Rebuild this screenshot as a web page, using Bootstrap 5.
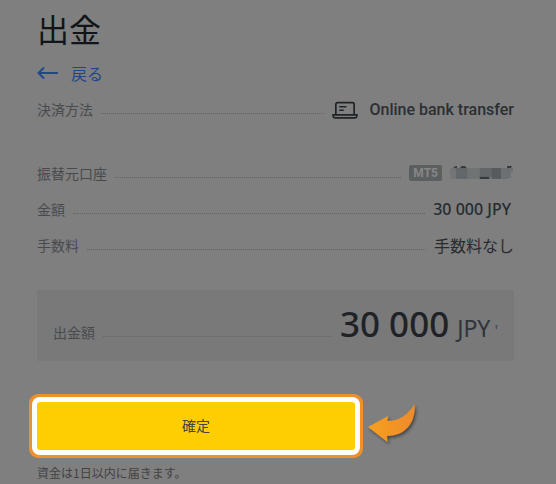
<!DOCTYPE html>
<html lang="ja">
<head>
<meta charset="utf-8">
<meta name="viewport" content="width=device-width, initial-scale=1">
<title>出金</title>
<link href="https://cdn.jsdelivr.net/npm/bootstrap@5.3.0/dist/css/bootstrap.min.css" rel="stylesheet">
<style>
body { background: #7f7f7f; color: #272b30; font-family: "Noto Sans", "Noto Sans CJK JP", sans-serif; font-size: 14px; line-height: 20px; }
.page { padding: 6px 42px 0 37px; }
.page-title { font-family: "Noto Sans CJK JP", sans-serif; font-size: 32px; line-height: 44px; font-weight: 400; color: #111519; }
.back-link { color: #214787; font-size: 16px; line-height: 24px; gap: 13px; margin-top: 11px; font-family: "Noto Sans CJK JP", sans-serif; font-weight: 400; }
.detail { height: 36px; }
.first-detail { margin: 6px 0 28px; }
.term { color: #484b4e; font-family: "Noto Sans CJK JP", sans-serif; font-weight: 400; }
.leader { height: 10px; margin: 0 8px; border-bottom: 1px dotted #626466; }
.method { font: 500 16px/24px Roboto, sans-serif; color: #2b2f34; gap: 11px; padding-top: 2px; }
.platform { font: 700 12px/16px Roboto, sans-serif; background: #5c5f60; color: #858687; padding: 0 4px; border-radius: 2px; }
.amount { font-size: 16px; font-weight: 500; padding-right: 3px; }
.fee { font: 400 16px/24px "Noto Sans CJK JP", sans-serif; }
.total { background: #797979; height: 71px; margin-top: 27px; padding: 12px 16px 0 16px; }
.total-value { padding-bottom: 12px; }
.total-number { font-size: 35px; line-height: 48px; font-weight: 500; color: #1f2328; }
.total-currency { font-size: 23px; line-height: 48px; margin-left: 8px; color: #303438; }
.total-mark { font-size: 16px; margin-left: 4px; color: #44484c; }
.confirm-row { margin-top: 41px; gap: 13px; }
.confirm { width: 66.7%; height: 48px; background: #ffce02; color: #444; border: 0; border-radius: 3px; font: 400 14px/20px "Noto Sans CJK JP", sans-serif; padding: 4px 12px 6px; box-shadow: 0 0 0 5px #fff, 0 0 0 8px #ef912b; }
.confirm:hover { background: #ffce02; }
.note { font: 400 12px/18px "Noto Sans CJK JP", sans-serif; color: #3f4245; margin-top: 14px; }
</style>
<script src="https://cdn.jsdelivr.net/npm/bootstrap@5.3.0/dist/js/bootstrap.bundle.min.js"></script>
</head>
<body>
<main class="page">
  <h1 class="page-title mb-0">出金</h1>
  <a href="#" class="back-link d-flex align-items-center text-decoration-none">
    <svg width="21" height="14" viewBox="0 0 21 14" fill="none" stroke="currentColor" stroke-width="2" aria-hidden="true"><path d="M21 7H2M7 1.500 1.500 7 7 12.500"/></svg>
    戻る
  </a>
  <dl class="mb-0">
    <div class="detail first-detail d-flex align-items-center">
      <dt class="term">決済方法</dt>
      <dd class="leader flex-grow-1" aria-hidden="true"></dd>
      <dd class="method d-flex align-items-center mb-0">
        <svg width="26" height="19" viewBox="0 0 27 19" fill="none" stroke="#202427" stroke-width="1.8" aria-hidden="true"><path d="M4 14V3a1.600 1.600 0 0 1 1.600-1.600h15.800A1.600 1.600 0 0 1 23 3v11M1.200 14h24.600v1.200a2 2 0 0 1-2 2H3.200a2 2 0 0 1-2-2z"/><path stroke-width="1.5" d="M7.500 5.700H15M7.500 9.200h4.700"/></svg>
        Online bank transfer
      </dd>
    </div>
    <div class="detail d-flex align-items-center">
      <dt class="term">振替元口座</dt>
      <dd class="leader flex-grow-1" aria-hidden="true"></dd>
      <dd class="d-flex align-items-center gap-2 mb-0">
        <span class="platform">MT5</span>
        <svg width="64" height="14" viewBox="0 0 65 14" role="img" aria-label="口座番号（非表示）"><path fill="#35393d" d="M3 2 6 0h1v3H3zM10 2l2-2h3l2 2v1h-7zM30 10h3v3h-3zM33 10h7v3h-7zM58 0h5l-3 5h-2z"/><path fill="#737677" d="M0 2h6v11H0z"/><path fill="#636769" d="M6 2h12v11H6z"/><path fill="#707374" d="M18 2h12v11H18z"/><path fill="#636668" d="M30 2h12v9H30z"/><path fill="#565b60" d="M42 2h10v11H42z"/><path fill="#6c7072" d="M52 2h7v11h-7z"/><path fill="#6c7072" d="M59 2h5v4h-2v6h-3z"/></svg>
      </dd>
    </div>
    <div class="detail d-flex align-items-center">
      <dt class="term">金額</dt>
      <dd class="leader flex-grow-1" aria-hidden="true"></dd>
      <dd class="amount mb-0">30 000 JPY</dd>
    </div>
    <div class="detail d-flex align-items-center">
      <dt class="term">手数料</dt>
      <dd class="leader flex-grow-1" aria-hidden="true"></dd>
      <dd class="fee mb-0">手数料なし</dd>
    </div>
    <div class="total d-flex align-items-center">
      <dt class="term">出金額</dt>
      <dd class="leader flex-grow-1" aria-hidden="true"></dd>
      <dd class="total-value d-flex align-items-baseline mb-0"><span class="total-number">30 000</span><span class="total-currency">JPY</span><span class="total-mark">'</span></dd>
    </div>
  </dl>
  <div class="confirm-row d-flex align-items-center">
    <button type="button" class="btn confirm flex-shrink-0">確定</button>
    <svg width="52" height="44" viewBox="0 0 52 44" aria-hidden="true">
      <defs>
        <linearGradient id="arrow-fill"><stop offset="0" stop-color="#f6a01e"/><stop offset="1" stop-color="#ee8b2c"/></linearGradient>
        <filter id="arrow-shadow" x="-20%" y="-20%" width="150%" height="150%"><feDropShadow dx="1.5" dy="2" stdDeviation="1.5" flood-color="#222" flood-opacity=".6"/></filter>
      </defs>
      <path filter="url(#arrow-shadow)" fill="url(#arrow-fill)" d="M0 23 20 12l-.5 5C31 17 40 11 46.500 0 48 18 38 32 19 32l.5 6z"/>
    </svg>
  </div>
  <p class="note mb-0">資金は1日以内に届きます。</p>
</main>
</body>
</html>
